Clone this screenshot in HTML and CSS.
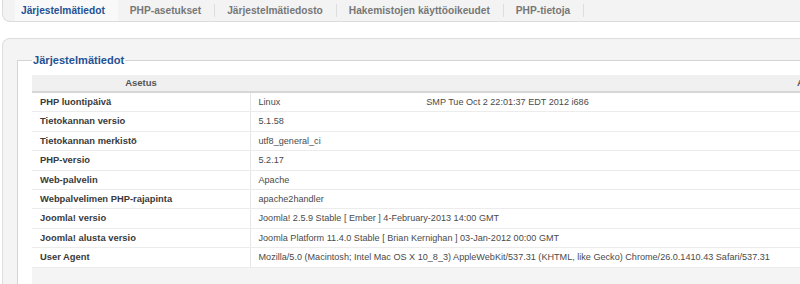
FILE: index.html
```html
<!DOCTYPE html>
<html lang="fi">
<head>
  <meta charset="UTF-8">
  <title>Järjestelmätiedot</title>
  <link rel="stylesheet" href="styles.css">
</head>
<body>

<!-- VÄLILEHDET -->
<ul class="valilehdet">
  <li class="aktiivinen">Järjestelmätiedot</li>
  <li>PHP-asetukset</li>
  <li>Järjestelmätiedosto</li>
  <li>Hakemistojen käyttöoikeudet</li>
  <li>PHP-tietoja</li>
</ul>

<!-- SISÄLTÖ -->
<div class="paneeli">
  <fieldset class="kentta">
    <legend>Järjestelmätiedot</legend>
    <table class="tiedot">
      <thead>
        <tr>
          <th class="otsake-asetus">Asetus</th>
          <th class="otsake-arvo">Arvo</th>
        </tr>
      </thead>
      <tbody>
        <tr><td class="nimi">PHP luontipäivä</td><td>Linux<span class="uname">SMP Tue Oct 2 22:01:37 EDT 2012 i686</span></td></tr>
        <tr><td class="nimi">Tietokannan versio</td><td>5.1.58</td></tr>
        <tr><td class="nimi">Tietokannan merkistö</td><td>utf8_general_ci</td></tr>
        <tr><td class="nimi">PHP-versio</td><td>5.2.17</td></tr>
        <tr><td class="nimi">Web-palvelin</td><td>Apache</td></tr>
        <tr><td class="nimi">Webpalvelimen PHP-rajapinta</td><td>apache2handler</td></tr>
        <tr><td class="nimi">Joomla! versio</td><td>Joomla! 2.5.9 Stable [ Ember ] 4-February-2013 14:00 GMT</td></tr>
        <tr><td class="nimi">Joomla! alusta versio</td><td>Joomla Platform 11.4.0 Stable [ Brian Kernighan ] 03-Jan-2012 00:00 GMT</td></tr>
        <tr><td class="nimi">User Agent</td><td>Mozilla/5.0 (Macintosh; Intel Mac OS X 10_8_3) AppleWebKit/537.31 (KHTML, like Gecko) Chrome/26.0.1410.43 Safari/537.31</td></tr>
      </tbody>
      <tfoot>
        <tr><td colspan="2"></td></tr>
      </tfoot>
    </table>
  </fieldset>
</div>

</body>
</html>
```

FILE: styles.css
```css
html, body {
  margin: 0;
  padding: 0;
  background: #fff;
  font-family: 'Liberation Sans', Arial, sans-serif;
  font-size: 9.1px;
  color: #4a4a4a;
  overflow: hidden;
}

/* VÄLILEHDET */
.valilehdet {
  list-style: none;
  margin: 0 0 0 2px;
  padding: 0 0 0 12px;
  height: 21px;
  display: flex;
  align-items: center;
  background: #f3f3f3;
  border: 1px solid #dcdcdc;
  border-top: none;
  border-right: none;
  border-bottom-left-radius: 8px;
}

.valilehdet li {
  font-weight: bold;
  font-size: 10.2px;
  color: #777;
  padding: 0 13px 0 12px;
  border-right: 1px solid #ddd;
  height: 13px;
  display: flex;
  align-items: center;
}

.valilehdet li.aktiivinen {
  color: #245193;
  background: #f9f9f9;
  height: 21px;
  padding: 0 13px 0 6px;
  border-right: none;
  box-shadow: 13px 0 0 -12px #ddd;
}

/* PANEELI */
.paneeli {
  margin: 16px 0 0 2px;
  padding: 15px 0 0 14px;
  background: #f4f4f4;
  border: 1px solid #dedede;
  border-right: none;
  border-bottom: none;
  border-top-left-radius: 8px;
  height: 300px;
}

.kentta {
  margin: 0;
  padding: 9px 0 0 14px;
  background: #fff;
  border: 1px solid #d4d4d4;
  border-right: none;
  border-bottom: none;
  min-width: 0;
  height: 300px;
}

.kentta legend {
  color: #245193;
  font-weight: bold;
  font-size: 11.1px;
  padding: 0 1px;
}

/* TAULUKKO */
.tiedot {
  border-collapse: collapse;
  width: 900px;
}

.tiedot th {
  background: #f0f0f0;
  color: #555;
  font-weight: bold;
  font-size: 9.5px;
  padding: 2px 8px;
  line-height: 12px;
  border-bottom: 2px solid #d6d6d6;
}

.otsake-asetus {
  width: 202px;
  text-align: center;
}

.otsake-arvo {
  text-align: left;
  padding-left: 547px !important;
}

.tiedot td {
  padding: 3px 8px;
  line-height: 12.4px;
  border-bottom: 1px solid #ececec;
  white-space: nowrap;
}

.tiedot td.nimi {
  font-weight: bold;
  font-size: 9.4px;
  color: #3a3a3a;
  border-right: 1px solid #e6e6e6;
}

.uname {
  margin-left: 146px;
}

.tiedot tfoot td {
  background: #f4f4f4;
  border-top: 1px solid #cfcfcf;
  height: 30px;
}
```
